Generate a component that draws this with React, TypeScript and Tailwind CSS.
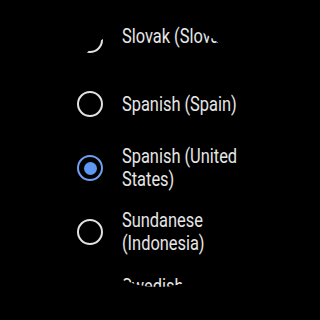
import React from "react";

const items: { label: string; selected?: boolean; nowrap?: boolean; shift?: string }[] = [
  { label: "Slovak (Slovakia)", nowrap: true, shift: "-mt-[8px]" },
  { label: "Spanish (Spain)" },
  { label: "Spanish (United States)", selected: true },
  { label: "Sundanese (Indonesia)" },
  { label: "Swedish (Sweden)", shift: "mt-[3px]" },
];

function Radio({ selected }: { selected?: boolean }) {
  if (selected) {
    return (
      <div className="w-[26px] h-[26px] shrink-0 rounded-full border-[2.5px] border-[#6f9ff2] flex items-center justify-center">
        <div className="w-[13px] h-[13px] rounded-full bg-[#5f96f2]" />
      </div>
    );
  }
  return <div className="w-[26px] h-[26px] shrink-0 rounded-full border-[2.5px] border-[#e2e2e2]" />;
}

export default function App() {
  return (
    <div className="w-[320px] h-[320px] bg-black overflow-hidden">
      <div className="w-[320px] h-[320px] [clip-path:ellipse(110px_133px_at_158px_154px)]">
        <div className="flex flex-col pt-[8px]">
          {items.map((it) => (
            <div key={it.label} className="h-[64px] shrink-0 flex items-center pl-[77px] gap-[19px]">
              <Radio selected={it.selected} />
              <div
                className={`${it.nowrap ? "whitespace-nowrap" : "w-[158px]"} ${it.shift ?? ""} shrink-0 origin-left scale-x-[0.82] text-[20px] leading-[23px] text-[#e6e6e6] font-['Roboto',sans-serif]`}
              >
                {it.label}
              </div>
            </div>
          ))}
        </div>
      </div>
    </div>
  );
}
